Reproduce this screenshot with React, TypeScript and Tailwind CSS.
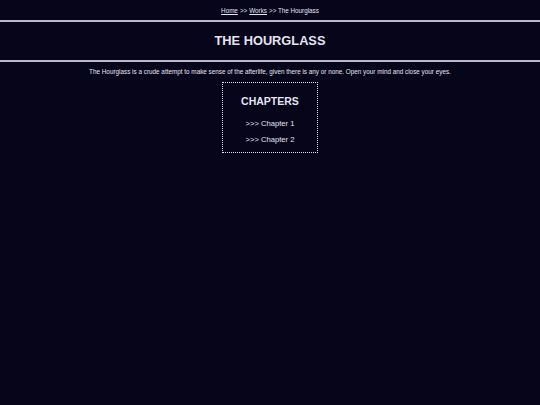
const chapters = ['Chapter 1', 'Chapter 2'];

export default function App() {
  return (
    <div className="min-h-screen w-full bg-[#06051a] text-[#e4e3f2] font-['Liberation_Sans',Arial,sans-serif]">
      {/* Breadcrumb */}
      <div className="flex h-[20px] items-center justify-center text-[6.3px] leading-[9px]">
        <a className="underline">Home</a>
        <span className="mx-[2px]">&gt;&gt;</span>
        <a className="underline">Works</a>
        <span className="ml-[2px]">&gt;&gt; The Hourglass</span>
      </div>
      <div className="h-[2px] bg-[#b9b8cc]" />

      {/* Title */}
      <div className="flex h-[38px] items-center justify-center">
        <h1 className="text-[12.8px] font-bold leading-[16px]">THE HOURGLASS</h1>
      </div>
      <div className="h-[2px] bg-[#b9b8cc]" />

      {/* Description */}
      <p className="pt-[5px] text-center text-[6.35px] leading-[9px]">
        The Hourglass is a crude attempt to make sense of the afterlife, given there is any or none. Open your mind and close your eyes.
      </p>

      {/* Chapters */}
      <div className="mt-[6px] flex justify-center">
        <div className="flex h-[71px] w-[96px] flex-col items-center border border-dotted border-[#e2e1ef] pt-[12px]">
          <h2 className="text-[10.5px] font-bold leading-[13px]">CHAPTERS</h2>
          <ul className="mt-[8px] flex flex-col items-center">
            {chapters.map((c) => (
              <li key={c} className="text-[7.6px] leading-[16px]">
                &gt;&gt;&gt; {c}
              </li>
            ))}
          </ul>
        </div>
      </div>
    </div>
  );
}
